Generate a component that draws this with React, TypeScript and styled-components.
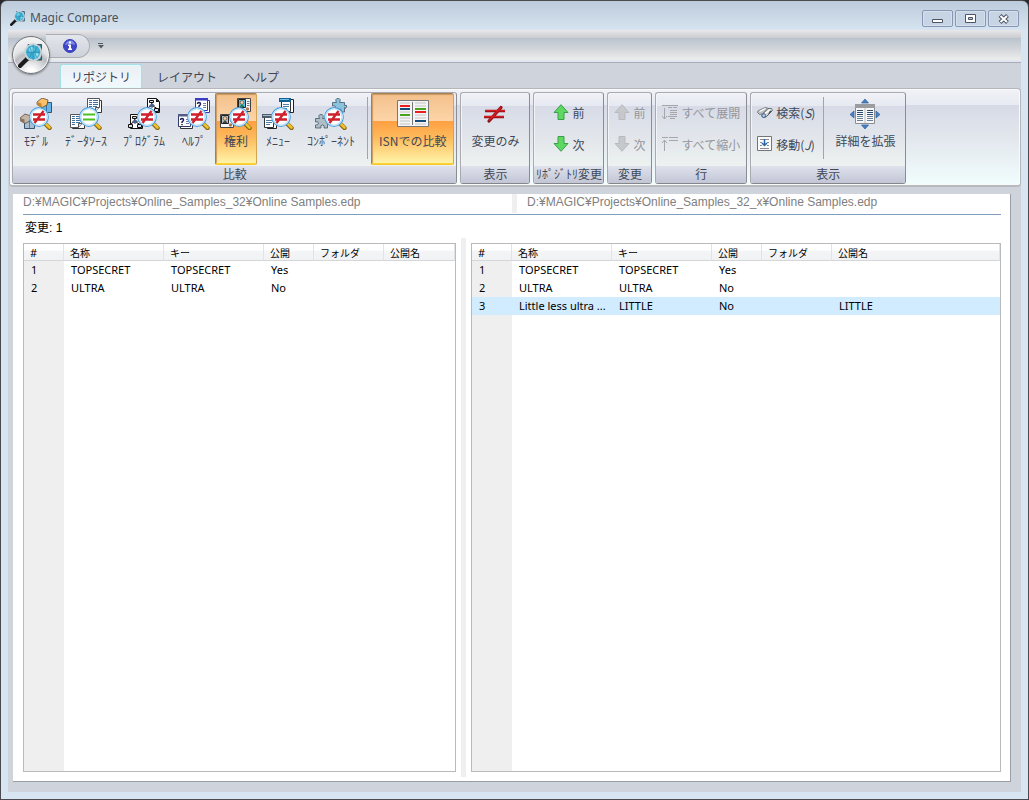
import React from "react";
import styled, { createGlobalStyle, css } from "styled-components";

const ui = `"Noto Sans", "Noto Sans CJK JP", sans-serif`;
const jp = `"Noto Sans CJK JP", sans-serif`;

const GlobalStyle = createGlobalStyle`
  * { box-sizing: border-box; }
  body { margin: 0; background: #2a2a2e; font-family: ${jp}; font-size: 12px; color: #3f4756; }
  button { font: inherit; color: inherit; background: none; border: 0; padding: 0; margin: 0; }
  svg { display: block; flex: none; }
`;

/* ---------- window frame ---------- */

const Window = styled.div`
  display: flex;
  flex-direction: column;
  min-height: 100vh;
  padding: 0 7px 7px;
  border: 1px solid #4a4a4f;
  border-radius: 7px 7px 0 0;
  background: linear-gradient(#bccbdb, #d7e4f1 30px);
`;

const TitleBar = styled.header`
  display: flex;
  align-items: center;
  height: 29px;
  padding: 5px 2px 0;
  gap: 4px;
`;

const Title = styled.h1`
  flex: 1;
  margin: 0;
  font: 400 12px/18px ${ui};
  color: #46525e;
`;

const WindowButtons = styled.div`
  display: flex;
  gap: 2px;
  align-self: flex-start;
  padding-top: 4px;
`;

const WindowButton = styled.button`
  display: grid;
  place-items: center;
  width: 31px;
  height: 17px;
  border: 1px solid #8796b4;
  border-radius: 2px;
  box-shadow: inset 0 0 0 1px #d5e0ec;
  background: #c6d4e3;
`;

const Client = styled.div`
  flex: 1;
  display: flex;
  flex-direction: column;
  position: relative;
  padding-bottom: 10px;
  background: #cfd3db;
`;

const QuickBar = styled.div`
  display: flex;
  align-items: center;
  height: 33px;
  padding-left: 38px;
  border-bottom: 1px solid #a9abb5;
  background: linear-gradient(#e9e7ea 0, #c9cbd0 8px, #b9c2cd 8px, #d5d8dc 20px, #ebebeb 29px, #dfe6f2 31px);
`;

const QuickItems = styled.div`
  display: flex;
  align-items: center;
  justify-content: flex-end;
  width: 44px;
  height: 24px;
  padding-right: 12px;
  border: 1px solid #aaadb5;
  border-left: 0;
  border-radius: 0 12px 12px 0;
  background: linear-gradient(#e3e6eb, #cdd2da);
`;

const QuickMore = styled.button`
  margin-left: 7px;
`;

const Orb = styled.button`
  position: absolute;
  left: 4px;
  top: 6px;
  display: grid;
  place-items: center;
  width: 38px;
  height: 38px;
  border: 1px solid #73767b;
  border-radius: 50%;
  background: radial-gradient(circle at 50% 100%, #ffffff 10%, #b9bbbf 48%, #e3e4e6 60%, #fafafa);
  box-shadow: 0 1px 2px #7d8087, inset 0 0 0 1px #f5f5f5;
`;

/* ---------- ribbon ---------- */

const Tabs = styled.nav`
  display: flex;
  align-items: flex-end;
  gap: 4px;
  height: 25px;
  padding-left: 52px;
`;

const Tab = styled.button<{ $active?: boolean }>`
  height: 24px;
  padding: 0 10px;
  border: 1px solid transparent;
  border-bottom: 0;
  border-radius: 3px 3px 0 0;
  font-size: 12px;
  line-height: 23px;
  ${(p) =>
    p.$active &&
    css`
      border-color: #a5dfe8;
      background: linear-gradient(#eceef4, #f2fafc);
      box-shadow: inset 0 0 0 1px #e4fbfd;
    `}
`;

const Ribbon = styled.div`
  display: flex;
  gap: 3px;
  height: 99px;
  margin: 0 0 0 1px;
  padding: 3px 2px 0;
  border: 1px solid #b5b6ba;
  border-bottom: 2px solid #b7b9bd;
  border-radius: 4px;
  box-shadow: inset 0 0 0 1px #f8fafc;
  background: linear-gradient(#f1f2f7, #e7eaf2 16px, #d6dae6 16px, #e3e8ee 50px, #f1fcfc 94px);
`;

const Group = styled.section`
  display: flex;
  flex-direction: column;
  height: 92px;
  border: 1px solid #a9aab0;
  border-right-color: #8c8d93;
  border-bottom-color: #85868c;
  border-radius: 3px;
  box-shadow: inset 1px 1px 0 #f3f4f8;
  background: linear-gradient(#f0f1f6, #e6e9f1 13px, #d7dbe7 13px, #e4e8ec 50px, #edf2f1 73px);
`;

const GroupBody = styled.div`
  display: flex;
  flex: 1;
  align-items: stretch;
  padding: 0 2px;
`;

const GroupName = styled.h2`
  height: 17px;
  margin: 0;
  text-align: center;
  font: 400 12px/16px ${jp};
  white-space: nowrap;
  background: linear-gradient(#dfe2ec, #c2c6d5);
  border-radius: 0 0 2px 2px;
`;

const BigButton = styled.button<{ $on?: boolean }>`
  display: flex;
  flex-direction: column;
  align-items: center;
  height: 72px;
  padding: 4px 4px 0;
  border: 1px solid transparent;
  border-radius: 2px;
  white-space: nowrap;
  line-height: 22px;
  ${(p) =>
    p.$on &&
    css`
      border-color: #a5814f #d2a552 #f8c82c #a5814f;
      background: linear-gradient(#f3c08c, #fdd5a8 27px, #ff9f42 27px, #fdbb5c 44px, #fff2a6 68px);
      box-shadow: inset 0 -1px 0 #fdd535, inset 1px 1px 1px #c99a63;
    `}
`;

const BigLabel = styled.span`
  padding: 0 3px;
`;

const Separator = styled.div`
  width: 1px;
  height: 62px;
  margin: 4px 3px 0 4px;
  background: #a2a4ab;
`;

const Stack = styled.div`
  display: flex;
  flex-direction: column;
  padding: 3px 4px 0;
`;

const SmallButton = styled.button<{ $wide?: boolean }>`
  display: flex;
  align-items: center;
  gap: 3px;
  height: 32px;
  padding: 0 ${(p) => (p.$wide ? 13 : 0)}px;
  white-space: nowrap;
  &:disabled { color: #94969c; }
`;

/* ---------- comparison area ---------- */

const Content = styled.main`
  flex: 1;
  display: flex;
  flex-direction: column;
  margin: 7px 10px 0 5px;
  padding: 0 9px 4px 10px;
  border: 1px solid #9b9ea3;
  border-width: 0 1px 1px 0;
  background: #fff;
`;

const Paths = styled.div`
  display: grid;
  grid-template-columns: 489fr 5px 484fr;
  height: 21px;
  padding-bottom: 1px;
  border-bottom: 1px solid #7f9dbd;
  font: 400 12px/16px "Liberation Sans", ${jp};
  color: #808080;
`;

const PathText = styled.span<{ $inset?: boolean }>`
  padding-left: ${(p) => (p.$inset ? 10 : 0)}px;
  white-space: nowrap;
  overflow: hidden;
`;

const Splitter = styled.div`
  background: #efefef;
`;

const Changes = styled.p`
  margin: 0;
  padding: 3px 2px 0;
  height: 23px;
  font: 400 12px/20px "Liberation Sans", ${jp};
  color: #000;
`;

const Panes = styled.div`
  flex: 1;
  display: grid;
  grid-template-columns: 433fr 5px 530fr;
  column-gap: 5px;
`;

const Pane = styled.div`
  margin: 5px 0 5px;
  border: 1px solid #b9babb;
  background: linear-gradient(90deg, #efefef 40px, #fff 40px);
  overflow: hidden;
`;

const List = styled.table`
  width: 100%;
  table-layout: fixed;
  border-collapse: separate;
  border-spacing: 0;
  font: 400 11px/18px ${ui};
  color: #000;
`;

const Col = styled.col<{ $w?: number }>`
  width: ${(p) => (p.$w ? `${p.$w}px` : "auto")};
`;

const Th = styled.th`
  height: 17px;
  padding: 2px 0 0 6px;
  text-align: left;
  font: 400 10px/14px ${jp};
  white-space: nowrap;
  border-right: 1px solid #e2e3e5;
  border-bottom: 1px solid #d5d6d8;
  background: linear-gradient(#fff 6px, #f4f5f7 7px, #f1f2f4);
  &:first-child { font: 400 11px/14px ${ui}; }
`;

const Row = styled.tr<{ $marked?: boolean }>`
  background: ${(p) => (p.$marked ? "#d1ecff" : "transparent")};
`;

const Td = styled.td`
  height: 18px;
  padding: 0 0 0 7px;
  white-space: nowrap;
`;

/* ---------- icons ---------- */

const Globe = ({ size }: { size: number }) => (
  <svg width={size} height={size} viewBox="0 0 24 24">
    <path d="M9 2h13v15H9z" fill="#17384a" />
    <path d="M10 3h3v2h-3zM19 3h2v3h-2zM19 14h2v2h-2z" fill="#4fb3cf" />
    <path d="M2 22l7-7" stroke="#1b1b1d" strokeWidth="4" strokeLinecap="round" />
    <circle cx="14" cy="9.500" r="7.400" fill="#3fb2d6" stroke="#c8d3d9" strokeWidth="1.800" />
    <path d="M10 6c2-2 4-2 5 0s-2 4-4 4zM15 10c2-1 4 0 4 1s-2 4-3 4z" fill="#8fdcec" />
    <path d="M14 2.500v14M7.500 9.500h13M10 4c3 3 3 8 0 11M18 4c-3 3-3 8 0 11" stroke="#2586ac" strokeWidth=".7" fill="none" />
  </svg>
);

type Kind = "model" | "data" | "program" | "help" | "rights" | "menu" | "component";

const Mini = ({ kind, top }: { kind: Kind; top?: boolean }) => {
  switch (kind) {
    case "model":
      return (
        <g>
          <path d="M4.500 4.500h10v10h-10z" fill={top ? "#69b4e6" : "#a9bfd3"} stroke="#35536f" />
          <path d="M9.500 5v9" stroke={top ? "#2f6fa3" : "#5f7b95"} />
          <path d="M0 4l5-4 6 2-1 5-5 2.500-5-3z" fill={top ? "#fbc06a" : "#c3b6a7"} stroke="#4d3a20" strokeWidth=".7" />
          <path d="M0 4l4.500 1.500v4l-4.500-3z" fill={top ? "#c9842a" : "#857667"} />
        </g>
      );
    case "data":
      return (
        <g>
          <path d="M2.500 2.500h12v12h-12z" fill="#fff" stroke="#333" />
          <path d="M.5.5h12v9l-4 4H.5z" fill="#fff" stroke="#555" />
          <path d="M2 2.500h3M6 2.500h5M2 4.500h3M6 4.500h5M2 6.500h3M6 6.500h5M2 8.500h3M6 8.500h4M2 10.500h3" stroke="#3f729f" />
          <path d="M8.500 13.500v-4h4" stroke="#555" fill="#ddd" />
        </g>
      );
    case "program":
      return (
        <g>
          <path d="M2.500.5h9l3 3v11h-12z" fill="#fff" stroke="#111" />
          <path d="M11 .5v3.500h3.500z" fill="#111" />
          <path d="M4.500 2.500h4v2h-4zM.5 10.500h4v3h-4zM9.500 10.500h4v3h-4z" fill="#dde" stroke="#111" />
          <path d="M6.500 5v3M2.500 10l4-2.500 5 2.500" stroke="#111" fill="none" />
          <path d="M7 5l3 2.500L7 10 4 7.500z" fill="#4f5f86" />
        </g>
      );
    case "help":
      return (
        <g>
          <path d="M2.500 2.500h12v12h-12z" fill="#fff" stroke={top ? "#3434b8" : "#333"} />
          <path d="M.5.5h12v12H.5z" fill="#fff" stroke={top ? "#3434b8" : "#333a66"} />
          <path d="M0 0h13v2.500H0z" fill={top ? "#3c3cc4" : "#555a88"} />
          <path d="M2.500 6q0-1.500 1.500-1.500t1.500 1.500q0 1-1.500 2v1M4 10v1.300" stroke="#1d1d58" strokeWidth="1.500" fill="none" />
          <path d="M8 5.500h3M8 7.500h3M8 9.500h3" stroke="#777ba8" />
        </g>
      );
    case "rights":
      return (
        <g>
          <path d="M.5.5h13v13H.5z" fill="#f4f6f7" stroke="#444" />
          <path d="M1.500 1.500h7v8h-7z" fill={top ? "#55c7ee" : "#b5c3ca"} stroke="#222" />
          <circle cx="5" cy="4.500" r="1.900" fill="#f2cda4" stroke="#4a3424" strokeWidth=".6" />
          <path d="M2.500 9q2.500-5 5 0z" fill={top ? "#2a7a48" : "#3f4a50"} />
          <path d="M10 3.500h2.500M10 5.500h2.500M10 7.500h2.500" stroke="#777" />
          <circle cx="10.500" cy="11" r="1.700" fill="#b07a56" />
        </g>
      );
    case "menu":
      return (
        <g>
          <path d="M5.500 1.500h9v13h-9z" fill="#fff" stroke="#222" />
          <path d="M2.500 3.500h9v10h-9z" fill="#fff" stroke="#333" />
          <path d="M0 0h12v4H0z" fill={top ? "#16608f" : "#4d5f6b"} />
          <path d="M1 1.500h9" stroke={top ? "#6fc1e8" : "#a9bac4"} />
          <path d="M4 6.500h6M4 8.500h6M4 10.500h4" stroke="#4f7da3" />
        </g>
      );
    case "component":
      return (
        <path
          d="M.5 4.500h4q-2-4 1.500-4t1.500 4h5v3q3-1 2 1.500t-2 .5v4.500H9q1-3-1.500-3t-1.500 3H.5v-3q3 0 3-2t-3-1z"
          fill={top ? "#8cc3dc" : "#b1bdc4"}
          stroke="#41586a"
          strokeWidth=".8"
        />
      );
  }
};

const CompareIcon = ({ kind }: { kind: Kind }) => (
  <svg width="32" height="32" viewBox="0 0 32 32">
    <g transform="translate(17 0)"><Mini kind={kind} top /></g>
    <g transform="translate(0 16)"><Mini kind={kind} /></g>
    <path d="M26 26.500l3.500 3.500" stroke="#8d6a14" strokeWidth="4.500" strokeLinecap="round" />
    <path d="M26 26l3.500 3.500" stroke="#ecc22c" strokeWidth="2.600" strokeLinecap="round" />
    <circle cx="19" cy="19" r="9.300" fill="#fff" stroke="#4a9fe0" strokeWidth="1.200" />
    <circle cx="19" cy="19" r="8.100" fill="none" stroke="#bfe2fa" strokeWidth="1.400" />
    {kind === "data" ? (
      <path d="M13 16.500h12M13 21.500h12" stroke="#4cc022" strokeWidth="2.200" />
    ) : (
      <path d="M13 16.500h12M13 21.500h12M23.500 13l-9 12" stroke="#d0202b" strokeWidth="2.300" />
    )}
  </svg>
);

const IsnIcon = () => (
  <svg width="32" height="32" viewBox="0 0 32 32">
    <path d="M.5 2.500h31v26H.5z" fill="#f4f4f4" stroke="#777" />
    <path d="M15.500 4v23" stroke="#777" />
    <path d="M3 5h10M3 14h10M3 20h10M3 23h10M18 5h11M18 8h11M18 17h11M18 20h11M18 26h11M3 26h10" stroke="#dcdcdc" strokeWidth="2" />
    <path d="M3 8h10M18 14h11" stroke="#ee1c1c" strokeWidth="2" />
    <path d="M3 11h10M18 23h11" stroke="#164a78" strokeWidth="2" />
    <path d="M3 17h10M18 11h11" stroke="#46a51b" strokeWidth="2" />
  </svg>
);

const NotEqualIcon = () => (
  <svg width="32" height="32" viewBox="0 0 32 32">
    <path d="M6 13h20M5 19h20" stroke="#8e1218" strokeWidth="2.400" />
    <path d="M22 9.500L10 23" stroke="#8e1218" strokeWidth="3.200" strokeLinecap="round" />
    <path d="M6 12.600h20M5 18.600h20M22 9.300L10 22.500" stroke="#d61c20" strokeWidth="1.400" />
  </svg>
);

const ArrowIcon = ({ down, off }: { down?: boolean; off?: boolean }) => (
  <svg width="16" height="16" viewBox="0 0 16 16">
    <path
      transform={down ? "rotate(180 8 8)" : undefined}
      d="M8 .7L15 8.500h-4V15.500H5V8.500H1z"
      fill={off ? "#c6c8cc" : "#5fd763"}
      stroke={off ? "#b8babf" : "#3a9f45"}
    />
  </svg>
);

const ExpandIcon = () => (
  <svg width="16" height="16" viewBox="1 0 16 16" stroke="#a5a7ad" fill="none">
    <path d="M1 1.500h16M7 3.500h4M12 3.500h4M9 6.500h7M9 8.500h7M9 10.500h7M7 12.500h9M9 14.500h5" />
    <path d="M3.500 4v11M1 12l2.500 3L6 12" />
  </svg>
);

const CollapseIcon = () => (
  <svg width="16" height="16" viewBox="1 0 16 16" stroke="#a5a7ad" fill="none">
    <path d="M1 1.500h6M8 1.500h9M8 4.500h9" />
    <path d="M3.500 15V4M1 7l2.500-3L6 7" />
  </svg>
);

const BinocularsIcon = () => (
  <svg width="16" height="16" viewBox="0 0 16 16">
    <path d="M.5 8.500q0-2 2-2.500l6-2.500 3 1-6 5.500-3 .5z" fill="#b9bcbf" stroke="#6a6d70" strokeWidth=".8" />
    <path d="M4.500 11.500L11 4.500h3.500l1 2-6.500 6.500q-3.500 1.500-4.500-1.500z" fill="#d4d7d9" stroke="#55585c" strokeWidth=".8" />
    <path d="M2.500 7.500l6-3M8 9.500l5.500-4" stroke="#fff" strokeWidth="1.300" />
    <path d="M13 6.500l2 .5-5 5.500z" fill="#4b4e52" />
    <circle cx="6.800" cy="11.600" r="1.900" fill="#a9cdf0" stroke="#35506f" strokeWidth=".8" />
  </svg>
);

const JumpIcon = () => (
  <svg width="16" height="16" viewBox="0 0 16 16">
    <path d="M.5.5h14v14H.5z" fill="#fbfbfb" stroke="#737579" />
    <path d="M3 3.500h9M3 6.500h2M10 6.500h2M3 9.500h2M10 9.500h2M3 12.500h9" stroke="#8a8d92" />
    <path d="M7.500 3v6M5 7l2.500 2.500L10 7" stroke="#2b66a8" strokeWidth="1.500" fill="none" />
  </svg>
);

const DetailIcon = () => (
  <svg width="32" height="32" viewBox="0 0 32 32">
    <path d="M16 1l3.500 4h-7zM16 31l3.500-4h-7zM1 16.500l4-3.500v7zM31 16.500l-4-3.500v7z" fill="#4a80c0" stroke="#315f99" strokeWidth=".7" />
    <path d="M6.500 6.500h19v19h-19z" fill="#f7f7f7" stroke="#8b8d90" />
    <path d="M6 6h20v4H6z" fill="#9a9c9f" />
    <path d="M16 10v15" stroke="#bbb" />
    <path d="M8 12.500h6M8 14.500h6M8 16.500h6M18 12.500h6M18 14.500h6M18 16.500h6" stroke="#2c4e74" />
    <path d="M8 18.500h6M8 20.500h6M8 22.500h6M18 18.500h6M18 20.500h6M18 22.500h6" stroke="#6a8098" />
  </svg>
);

const InfoIcon = () => (
  <svg width="14" height="14" viewBox="0 0 14 14">
    <circle cx="7" cy="7" r="6.500" fill="#3f47c9" stroke="#3a41bd" />
    <path d="M2 6q1-4 5-4.500T12 6q-5-2-10 0z" fill="#7d8ce8" />
    <path d="M6 2.500h2v2H6zM5 5.500h3v4h1V11H5V9.500h1V7H5z" fill="#fff" />
  </svg>
);

const MoreIcon = () => (
  <svg width="8" height="6" viewBox="0 0 8 6">
    <path d="M1 .5h5" stroke="#555b66" />
    <path d="M1 2h6L4 5.500z" fill="#555b66" />
  </svg>
);

const MinimizeIcon = () => (
  <svg width="12" height="12" viewBox="0 0 12 12">
    <path d="M.5 6.500h10v3H.5z" fill="#fff" stroke="#4c5468" />
  </svg>
);

const RestoreIcon = () => (
  <svg width="12" height="12" viewBox="0 0 12 12">
    <path d="M.5 1.500h10v8H.5z" fill="#fff" stroke="#4c5468" />
    <path d="M3.500 4.500h4v2h-4z" fill="#b7c4d6" stroke="#4c5468" />
  </svg>
);

const CloseIcon = () => (
  <svg width="12" height="12" viewBox="0 0 12 12">
    <path d="M2 2.500l7.500 7M9.500 2.500L2 9.500" stroke="#4c5468" strokeWidth="4" />
    <path d="M2.500 3l6.500 6M9 3L2.500 9" stroke="#fff" strokeWidth="2" />
  </svg>
);

/* ---------- data ---------- */

const tools: { label: string; kind: Kind; on?: boolean }[] = [
  { label: "ﾓﾃﾞﾙ", kind: "model" },
  { label: "ﾃﾞｰﾀｿｰｽ", kind: "data" },
  { label: "ﾌﾟﾛｸﾞﾗﾑ", kind: "program" },
  { label: "ﾍﾙﾌﾟ", kind: "help" },
  { label: "権利", kind: "rights", on: true },
  { label: "ﾒﾆｭｰ", kind: "menu" },
  { label: "ｺﾝﾎﾟｰﾈﾝﾄ", kind: "component" },
];

type Right = { cells: string[]; marked?: boolean };

const baseRows: Right[] = [
  { cells: ["TOPSECRET", "TOPSECRET", "Yes", "", ""] },
  { cells: ["ULTRA", "ULTRA", "No", "", ""] },
];

const newRows: Right[] = [
  ...baseRows,
  { cells: ["Little less ultra ...", "LITTLE", "No", "", "LITTLE"], marked: true },
];

const RightsList = ({ rows, label }: { rows: Right[]; label: string }) => (
  <Pane>
    <List aria-label={label}>
      <colgroup>
        <Col $w={40} />
        <Col $w={100} />
        <Col $w={100} />
        <Col $w={50} />
        <Col $w={70} />
        <Col />
      </colgroup>
      <thead>
        <tr>
          {["#", "名称", "キー", "公開", "フォルダ", "公開名"].map((h) => (
            <Th key={h}>{h}</Th>
          ))}
        </tr>
      </thead>
      <tbody>
        {rows.map((r, i) => (
          <Row key={i} $marked={r.marked}>
            <Td>{i + 1}</Td>
            {r.cells.map((c, j) => (
              <Td key={j}>{c}</Td>
            ))}
          </Row>
        ))}
      </tbody>
    </List>
  </Pane>
);

export default function App() {
  return (
    <>
      <GlobalStyle />
      <Window>
        <TitleBar>
          <Globe size={16} />
          <Title>Magic Compare</Title>
          <WindowButtons>
            <WindowButton aria-label="Minimize"><MinimizeIcon /></WindowButton>
            <WindowButton aria-label="Restore"><RestoreIcon /></WindowButton>
            <WindowButton aria-label="Close"><CloseIcon /></WindowButton>
          </WindowButtons>
        </TitleBar>
        <Client>
          <QuickBar>
            <QuickItems>
              <button aria-label="Info"><InfoIcon /></button>
            </QuickItems>
            <QuickMore aria-label="More"><MoreIcon /></QuickMore>
          </QuickBar>
          <Orb aria-label="Menu"><Globe size={26} /></Orb>
          <Tabs>
            <Tab $active>リポジトリ</Tab>
            <Tab>レイアウト</Tab>
            <Tab>ヘルプ</Tab>
          </Tabs>
          <Ribbon>
            <Group>
              <GroupBody>
                {tools.map((t) => (
                  <BigButton key={t.kind} $on={t.on}>
                    <CompareIcon kind={t.kind} />
                    <BigLabel>{t.label}</BigLabel>
                  </BigButton>
                ))}
                <Separator />
                <BigButton $on>
                  <IsnIcon />
                  <BigLabel>ISNでの比較</BigLabel>
                </BigButton>
              </GroupBody>
              <GroupName>比較</GroupName>
            </Group>
            <Group>
              <GroupBody>
                <BigButton>
                  <NotEqualIcon />
                  <BigLabel>変更のみ</BigLabel>
                </BigButton>
              </GroupBody>
              <GroupName>表示</GroupName>
            </Group>
            <Group>
              <GroupBody>
                <Stack>
                  <SmallButton $wide><ArrowIcon />前</SmallButton>
                  <SmallButton $wide><ArrowIcon down />次</SmallButton>
                </Stack>
              </GroupBody>
              <GroupName>ﾘﾎﾟｼﾞﾄﾘ変更</GroupName>
            </Group>
            <Group>
              <GroupBody>
                <Stack>
                  <SmallButton disabled><ArrowIcon off />前</SmallButton>
                  <SmallButton disabled><ArrowIcon down off />次</SmallButton>
                </Stack>
              </GroupBody>
              <GroupName>変更</GroupName>
            </Group>
            <Group>
              <GroupBody>
                <Stack>
                  <SmallButton disabled><ExpandIcon />すべて展開</SmallButton>
                  <SmallButton disabled><CollapseIcon />すべて縮小</SmallButton>
                </Stack>
              </GroupBody>
              <GroupName>行</GroupName>
            </Group>
            <Group>
              <GroupBody>
                <Stack>
                  <SmallButton><BinocularsIcon /><span>検索(<i>S</i>)</span></SmallButton>
                  <SmallButton><JumpIcon /><span>移動(<i>J</i>)</span></SmallButton>
                </Stack>
                <Separator />
                <BigButton>
                  <DetailIcon />
                  <BigLabel>詳細を拡張</BigLabel>
                </BigButton>
              </GroupBody>
              <GroupName>表示</GroupName>
            </Group>
          </Ribbon>
          <Content>
            <Paths>
              <PathText>D:¥MAGIC¥Projects¥Online_Samples_32¥Online Samples.edp</PathText>
              <Splitter />
              <PathText $inset>D:¥MAGIC¥Projects¥Online_Samples_32_x¥Online Samples.edp</PathText>
            </Paths>
            <Changes>変更: 1</Changes>
            <Panes>
              <RightsList rows={baseRows} label="Online_Samples_32" />
              <Splitter />
              <RightsList rows={newRows} label="Online_Samples_32_x" />
            </Panes>
          </Content>
        </Client>
      </Window>
    </>
  );
}
